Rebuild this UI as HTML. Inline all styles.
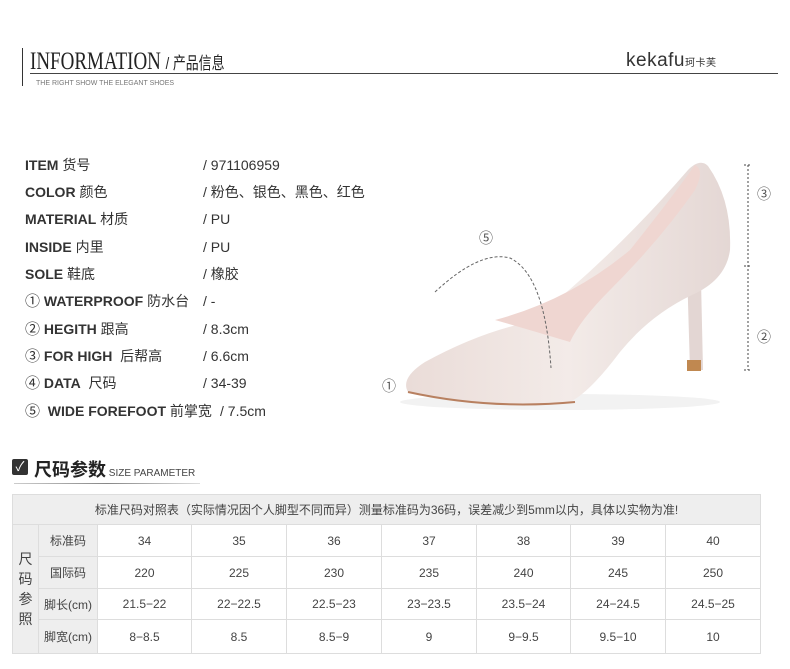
<!DOCTYPE html>
<html><head><meta charset="utf-8"><style>
*{margin:0;padding:0;box-sizing:border-box}
body{width:790px;height:669px;background:#fff;position:relative;overflow:hidden;font-family:"Liberation Sans","Noto Sans CJK SC",sans-serif;color:#333}
.abs{position:absolute;white-space:nowrap}
.row{position:absolute;left:25px;font-size:14px;color:#333;line-height:18px;height:18px}
.row b{font-weight:bold}
.c{font-size:15px;line-height:14px;display:inline-block;vertical-align:top;margin-top:3px}
.val{position:absolute;font-size:14px;color:#333;white-space:nowrap;line-height:18px}
table{position:absolute;left:12px;top:494px;border-collapse:collapse;font-size:12px;color:#444}
td{border:1px solid #ddd;text-align:center;height:31px}
.g{background:#eeeeee}
</style></head><body>
<div class="abs" style="left:22px;top:48px;width:1px;height:38px;background:#333"></div>
<div class="abs" style="left:30px;top:48px;font-family:'Liberation Serif',serif;font-size:25px;color:#222;transform:scaleX(0.76);transform-origin:left">INFORMATION <span style="font-family:'Liberation Sans','Noto Sans CJK SC',sans-serif;font-size:17px">/ 产品信息</span></div>
<div class="abs" style="left:30px;top:73px;width:748px;height:1px;background:#444"></div>
<div class="abs" style="left:36px;top:80px;font-size:7px;color:#777">THE RIGHT SHOW THE ELEGANT SHOES</div>
<div class="abs" style="left:626px;top:50px;font-size:19px;color:#333;letter-spacing:0.5px">kekafu<span style="font-size:10px">珂卡芙</span></div>

<div class="row" style="top:156px"><b>ITEM</b> 货号</div><div class="val" style="left:203px;top:156px">/ 971106959</div>
<div class="row" style="top:183px"><b>COLOR</b> 颜色</div><div class="val" style="left:203px;top:183px">/ 粉色、银色、黑色、红色</div>
<div class="row" style="top:210px"><b>MATERIAL</b> 材质</div><div class="val" style="left:203px;top:210px">/ PU</div>
<div class="row" style="top:238px"><b>INSIDE</b> 内里</div><div class="val" style="left:203px;top:238px">/ PU</div>
<div class="row" style="top:265px"><b>SOLE</b> 鞋底</div><div class="val" style="left:203px;top:265px">/ 橡胶</div>
<div class="row" style="top:292px"><span class="c">①</span> <b>WATERPROOF</b> 防水台</div><div class="val" style="left:203px;top:292px">/ -</div>
<div class="row" style="top:320px"><span class="c">②</span> <b>HEGITH</b> 跟高</div><div class="val" style="left:203px;top:320px">/ 8.3cm</div>
<div class="row" style="top:347px"><span class="c">③</span> <b>FOR HIGH</b>&nbsp; 后帮高</div><div class="val" style="left:203px;top:347px">/ 6.6cm</div>
<div class="row" style="top:374px"><span class="c">④</span> <b>DATA</b>&nbsp; 尺码</div><div class="val" style="left:203px;top:374px">/ 34-39</div>
<div class="row" style="top:402px"><span class="c">⑤</span>&nbsp; <b>WIDE FOREFOOT</b> 前掌宽</div><div class="val" style="left:220px;top:402px">/ 7.5cm</div>

<svg class="abs" style="left:370px;top:140px" width="420" height="280" viewBox="0 0 420 280">
<defs><linearGradient id="s" x1="0" y1="0" x2="1" y2="0"><stop offset="0" stop-color="#eadcd8"/><stop offset="0.5" stop-color="#f3ebe8"/><stop offset="1" stop-color="#e4d7d4"/></linearGradient></defs>
<ellipse cx="190" cy="262" rx="160" ry="8" fill="#f2f2f2"/>
<path d="M316 95 L330 95 L333 230 L320 230 Z" fill="#e3d6d3"/>
<rect x="317" y="220" width="14" height="11" fill="#c08850"/>
<path d="M38 252 Q30 238 55 222 Q110 192 160 182 Q240 120 318 30 Q330 18 338 26 Q362 60 360 110 Q356 140 322 155 Q280 175 250 212 Q220 252 200 262 Q120 270 38 252 Z" fill="url(#s)"/>
<path d="M125 180 Q200 160 260 110 Q300 60 325 25 Q335 30 325 50 Q290 100 240 150 Q210 180 200 202 Q160 190 125 180 Z" fill="#efd6d1"/>
<path d="M38 252 Q120 270 205 262" stroke="#b88060" stroke-width="2" fill="none"/>
<path d="M65 152 Q110 110 140 118 Q175 135 181 228" stroke="#666" stroke-dasharray="3,2" fill="none"/>
<text x="109" y="103" font-size="14" fill="#555">⑤</text>
<text x="12" y="251" font-size="14" fill="#555">①</text>
<path d="M378 25 V230 M374 25 H382 M374 126 H382 M374 230 H382" stroke="#444" stroke-dasharray="2,2" fill="none"/>
<text x="387" y="59" font-size="14" fill="#555">③</text>
<text x="387" y="202" font-size="14" fill="#555">②</text>
</svg>

<div class="abs" style="left:12px;top:459px;width:16px;height:16px;background:#333;border-radius:2px;color:#fff;font-size:13px;line-height:16px;text-align:center">✓</div>
<div class="abs" style="left:34px;top:456px;font-size:18px;color:#222;font-weight:bold">尺码参数<span style="font-size:10px;font-weight:normal;color:#444"> SIZE PARAMETER</span></div>
<div class="abs" style="left:14px;top:483px;width:186px;height:1px;background:linear-gradient(90deg,#ccc,#888,#ddd)"></div>

<table>
<tr><td class="g" colspan="9" style="height:30px">标准尺码对照表（实际情况因个人脚型不同而异）测量标准码为36码，误差减少到5mm以内，具体以实物为准!</td></tr>
<tr><td class="g" rowspan="4" style="width:26px;font-size:14px;line-height:20px">尺<br>码<br>参<br>照</td><td class="g" style="width:59px;height:32px">标准码</td><td style="width:94px">34</td><td style="width:95px">35</td><td style="width:95px">36</td><td style="width:95px">37</td><td style="width:94px">38</td><td style="width:95px">39</td><td style="width:95px">40</td></tr>
<tr><td class="g" style="height:32px">国际码</td><td>220</td><td>225</td><td>230</td><td>235</td><td>240</td><td>245</td><td>250</td></tr>
<tr><td class="g">脚长(cm)</td><td>21.5−22</td><td>22−22.5</td><td>22.5−23</td><td>23−23.5</td><td>23.5−24</td><td>24−24.5</td><td>24.5−25</td></tr>
<tr><td class="g" style="height:34px">脚宽(cm)</td><td>8−8.5</td><td>8.5</td><td>8.5−9</td><td>9</td><td>9−9.5</td><td>9.5−10</td><td>10</td></tr>
</table>
</body></html>
